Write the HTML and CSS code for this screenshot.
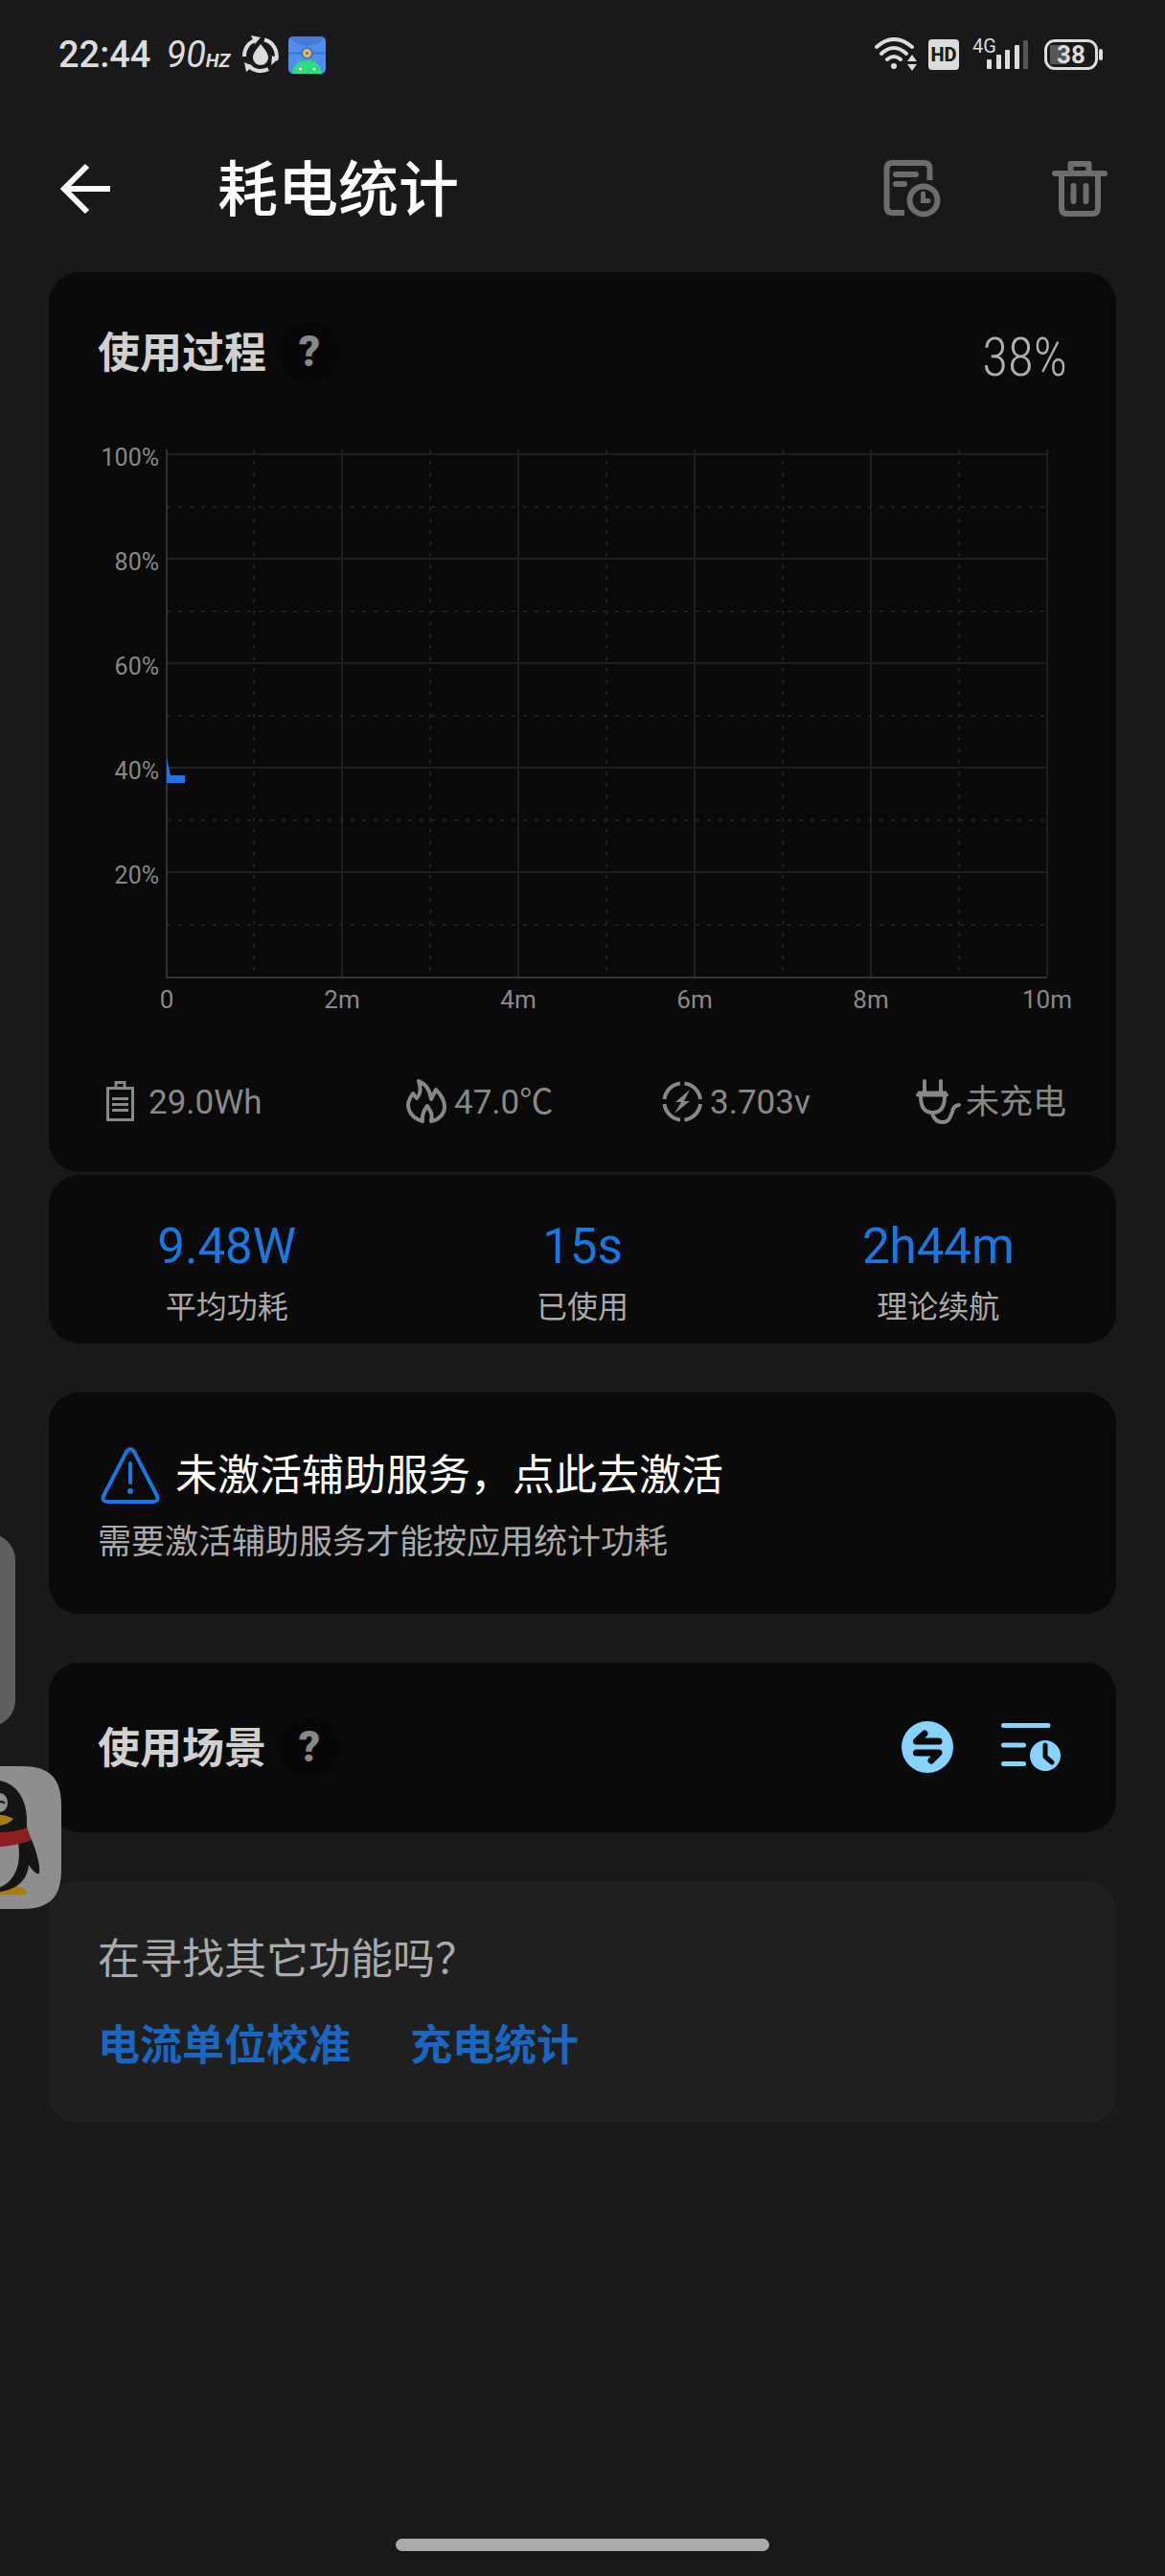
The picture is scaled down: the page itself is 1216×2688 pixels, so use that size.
FILE: index.html
```html
<!DOCTYPE html>
<html lang="zh-CN">
<head>
<meta charset="utf-8">
<meta name="viewport" content="width=device-width, initial-scale=1">
<title>耗电统计</title>
<link rel="stylesheet" href="styles.css">
</head>
<body>
<div class="status">
  <div class="status-side">
    <time class="clock">22:44</time>
    <span class="rate">90<small>HZ</small></span>
    <svg class="drop-icon" width="40" height="40" viewBox="0 0 40 40" fill="none" stroke="#dcdcdc" stroke-width="4">
      <path d="M3 22A17 17 0 0 1 13 5.500M24 4.500A17 17 0 0 1 36 26M28 35A17 17 0 0 1 7 31"/>
      <path fill="#dcdcdc" stroke="none" d="M20 9c5 6 8 10 8 14a8 8 0 0 1-16 0c0-4 3-8 8-14zM10 0l10 2-6 7zM39 24l-8 7 1-10zM3 28l9 4-7 6z"/>
    </svg>
    <svg class="app-icon" width="39" height="39" viewBox="0 0 39 39">
      <rect width="39" height="39" rx="5" fill="#508df0"/>
      <path d="M2 2Q4 0 6 0H33Q36 0 37 2Q30 10 19.500 10T2 2z" fill="#437bd8"/>
      <path d="M0 17.500H39" stroke="#3c74d4" stroke-width="2"/>
      <circle cx="19.500" cy="17.500" r="6" fill="#3c6cc0"/>
      <circle cx="19.500" cy="17.500" r="3" fill="none" stroke="#e6bf5c" stroke-width="3"/>
      <path d="M4 39a15.500 14 0 0 1 31 0z" fill="#30dc80"/>
      <path d="M9 22l4 7M30 22l-4 7" stroke="#30dc80"/>
      <circle cx="12.500" cy="34" r="1.500" fill="#fff"/><circle cx="27" cy="34" r="1.500" fill="#fff"/>
    </svg>
  </div>
  <div class="status-side status-right">
    <svg width="46" height="36" viewBox="0 0 46 36" fill="none" stroke="#dcdcdc" stroke-width="4" stroke-linecap="round">
      <path d="M3 10Q21 -6 40 10M8 17Q21 5 34 17M14 23Q21 17 28 23"/>
      <circle cx="21" cy="30" r="3" fill="#dcdcdc" stroke="none"/>
      <path d="M35 25l5-7 5 7zM35 28h10l-5 7z" fill="#dcdcdc" stroke="none"/>
    </svg>
    <span class="hd">HD</span>
    <span class="cell">
      <span class="cell-net">4G</span>
      <svg width="44" height="30" viewBox="0 0 44 30" fill="#dcdcdc">
        <rect x="0" y="20" width="5" height="10" rx="1"/><rect x="10" y="15" width="5" height="15" rx="1"/>
        <rect x="19" y="10" width="5" height="20" rx="1"/><rect x="29" y="5" width="5" height="25" rx="1"/>
        <rect x="38" y="0" width="5" height="30" rx="1" fill="#555"/>
      </svg>
    </span>
    <span class="battery"><span class="battery-box">38</span><i class="battery-nub"></i></span>
  </div>
</div>

<header class="bar">
  <button class="icon-btn" aria-label="返回">
    <svg width="54" height="54" viewBox="0 0 54 54" fill="none" stroke="#fff" stroke-width="6"><path d="M53 27H5M29 3L5 27L29 51"/></svg>
  </button>
  <h1>耗电统计</h1>
  <button class="icon-btn" aria-label="历史记录">
    <svg width="62" height="62" viewBox="0 0 62 62" fill="none" stroke="#6d6d6d" stroke-width="6" stroke-linecap="round">
      <path d="M48.500 22V10Q48.500 4 42.500 4H9.500Q3.500 4 3.500 10V50Q3.500 56 9.500 56H22" stroke-linecap="butt"/>
      <path d="M13 16H34M13 26H22"/>
      <circle cx="42" cy="43" r="14.500" stroke-width="6"/>
      <path d="M41.500 36V43.500H47" stroke-width="5"/>
    </svg>
  </button>
  <button class="icon-btn" aria-label="删除">
    <svg width="58" height="60" viewBox="0 0 58 60" fill="none" stroke="#6d6d6d" stroke-width="6" stroke-linecap="round" stroke-linejoin="round">
      <path d="M3 14H55M10 16V50Q10 56 16 56H42Q48 56 48 50V16M19.500 12V4H38.500V12M22.500 27V43M35.500 27V43"/>
    </svg>
  </button>
</header>

<main>
  <section class="card process">
    <div class="card-head">
      <h2>使用过程</h2>
      <button class="help" aria-label="帮助">?</button>
      <span class="level">38%</span>
    </div>
    <div class="chart">
      <svg class="plot" viewBox="0 0 1012 600" role="img" aria-label="电量曲线">
        <g class="grid-line">
          <path d="M72 23H991M72 132H991M72 241H991M72 350H991M72 459H991"/>
          <path d="M255 18V568M439 18V568M623 18V568M807 18V568M991 18V568"/>
        </g>
        <g class="grid-dash">
          <path d="M72 78H991M72 187H991M72 296H991M72 405H991M72 514H991"/>
          <path d="M163 18V568M347 18V568M531 18V568M715 18V568M899 18V568"/>
        </g>
        <path class="axis" d="M72 18V569H991"/>
        <path class="curve" d="M72 340L76 358H91V366H72z"/>
        <g class="tick tick-y">
          <text x="64" y="35">100%</text><text x="64" y="144">80%</text><text x="64" y="253">60%</text>
          <text x="64" y="362">40%</text><text x="64" y="471">20%</text>
        </g>
        <g class="tick tick-x">
          <text x="72" y="601">0</text><text x="255" y="601">2m</text><text x="439" y="601">4m</text>
          <text x="623" y="601">6m</text><text x="807" y="601">8m</text><text x="991" y="601">10m</text>
        </g>
      </svg>
    </div>
    <ul class="facts">
      <li>
        <svg width="48" height="48" viewBox="0 0 48 48" fill="none" stroke="#888" stroke-width="3"><path d="M10.500 10.500H36.500V43.500H10.500zM19 10V4.500H28V10M15 21.500H32M15 27.500H32M15 33.500H32"/></svg>
        <span>29.0Wh</span>
      </li>
      <li>
        <svg width="48" height="48" viewBox="0 0 48 48" fill="none" stroke="#888" stroke-width="4" stroke-linejoin="round"><path d="M20 45C10 42 5 35 5 28C5 23 8 19 10 16L14 21C19 16 18 9 16 3C23 6 28 13 29 22L34 12C40 18 43 24 43 30C43 38 36 44 29 45C31 37 28 34 25 29C21 34 19 38 20 45z"/></svg>
        <span>47.0℃</span>
      </li>
      <li>
        <svg width="48" height="48" viewBox="0 0 48 48" fill="none" stroke="#888" stroke-width="4"><path d="M22 5.500A19 19 0 0 0 5.500 22M26.500 5.500A19 19 0 0 1 43 22M5.500 27A19 19 0 0 0 22 43.500M43 27A19 19 0 0 1 26.500 43.500"/><path d="M32 12L17 25H23L16 37L32 24H26z" fill="#888" stroke="none"/></svg>
        <span>3.703v</span>
      </li>
      <li>
        <svg width="48" height="48" viewBox="0 0 48 48" fill="none" stroke="#888" stroke-width="4" stroke-linecap="round"><path d="M10 3V14M27 3V14M3 17.500H33M6 19C6 30 10 36 18.500 36S31 30 31 19M18 37C20 43 24 46 29 46C36 46 37 40 39 35C40 30 42 29 46 28"/><path d="M4 15H32" stroke-width="3"/></svg>
        <span>未充电</span>
      </li>
    </ul>
  </section>

  <dl class="card stats">
    <div><dd>9.48W</dd><dt>平均功耗</dt></div>
    <div><dd>15s</dd><dt>已使用</dt></div>
    <div><dd>2h44m</dd><dt>理论续航</dt></div>
  </dl>

  <a class="card notice" href="#activate">
    <span class="notice-title">
      <svg width="66" height="62" viewBox="0 0 66 62" fill="none" stroke="#1a76e0" stroke-width="4" stroke-linecap="round" stroke-linejoin="round"><path d="M30 6Q34 0 38 6L62 52Q64 58 58 58H10Q4 58 6 52zM34 18V38"/><circle cx="34" cy="47" r="3" fill="#1a76e0" stroke="none"/></svg>
      未激活辅助服务，点此去激活
    </span>
    <span class="notice-text">需要激活辅助服务才能按应用统计功耗</span>
  </a>

  <section class="card scene">
    <h2>使用场景</h2>
    <button class="help" aria-label="帮助">?</button>
    <button class="icon-btn swap" aria-label="切换">
      <svg width="56" height="56" viewBox="0 0 56 56" fill="none" stroke="#0a0a0a" stroke-width="7" stroke-linecap="round" stroke-linejoin="round"><circle cx="28" cy="28" r="27" fill="#87d3ff" stroke="none"/><path d="M40 22H16.500L25 14M16.500 34H40L32 42"/></svg>
    </button>
    <button class="icon-btn" aria-label="时间线">
      <svg width="64" height="52" viewBox="0 0 64 52" fill="none" stroke="#87d3ff" stroke-width="5" stroke-linecap="round" stroke-linejoin="round"><path d="M3.500 3.500H50M3.500 24H24.500M3.500 43.500H24.500"/><circle cx="47" cy="35" r="16" fill="#87d3ff" stroke="none"/><path d="M47 24V36L54 42" stroke="#0a0a0a"/></svg>
    </button>
  </section>

  <section class="card more">
    <p>在寻找其它功能吗？</p>
    <nav><a href="#calibrate">电流单位校准</a><a href="#charge">充电统计</a></nav>
  </section>
</main>

<i class="edge-handle"></i>
<svg class="float-app" width="149" height="149" viewBox="0 0 149 149" role="img" aria-label="QQ">
  <path d="M42 0H107C137 0 149 12 149 42V107C149 137 137 149 107 149H42C12 149 0 137 0 107V42C0 12 12 0 42 0z" fill="#8e8e8e"/>
  <path d="M76 126C95 122 112 126 113 131S105 134 97 134H76z" fill="#a57d12"/>
  <path d="M76 14C101 14 114 33 113 60C112 68 118 75 120 82C124 92 127 105 126 111C125 115 119 109 115 103C113 122 99 131 76 132z" fill="#141414"/>
  <path d="M76 84L104 80C107 98 104 124 76 129z" fill="#8e8e8e"/>
  <ellipse cx="85" cy="38" rx="8" ry="10" fill="#8e8e8e"/>
  <path d="M83 39Q87 35 90 39" fill="none" stroke="#141414" stroke-width="2"/>
  <path d="M70 51Q90 49 99 55Q93 62 76 63z" fill="#a57d12"/>
  <path d="M76 69Q98 70 113 64L118 77Q104 83 76 85z" fill="#8b1f22"/>
</svg>
<i class="home-bar"></i>
</body>
</html>
```
FILE: styles.css
```css
* { box-sizing: border-box; }
body {
  margin: 0;
  min-height: 100vh;
  display: flex;
  flex-direction: column;
  position: relative;
  overflow-x: hidden;
  background: #191919;
  color: #aaa;
  font-family: Roboto, "Noto Sans CJK SC", sans-serif;
}
h1, h2, p, dl, dd, ul { margin: 0; padding: 0; }
svg { display: block; flex: none; }
button { padding: 0; border: 0; background: none; font: inherit; color: inherit; cursor: pointer; }
a { text-decoration: none; color: inherit; }

.status {
  display: flex;
  justify-content: space-between;
  align-items: center;
  height: 114px;
  padding: 0 65px 0 61px;
  color: #dcdcdc;
}
.status-side { display: flex; align-items: center; }
.clock { font-size: 38px; font-weight: 500; }
.rate { margin-left: 16px; font-size: 38px; font-style: italic; }
.rate small { font-size: 20px; font-weight: 700; }
.drop-icon { margin-left: 12px; }
.app-icon { margin-left: 9px; }
.hd {
  width: 32px;
  margin-left: 11px;
  border-radius: 4px;
  background: #dcdcdc;
  color: #191919;
  font-size: 20px;
  font-weight: 800;
  line-height: 32px;
  text-align: center;
}
.cell { position: relative; margin-left: 29px; }
.cell-net { position: absolute; left: -15px; top: -6px; font-size: 20px; line-height: 24px; }
.battery { display: flex; align-items: center; gap: 1px; margin-left: 16px; }
.battery-box {
  width: 56px;
  height: 32px;
  border: 3px solid #dcdcdc;
  border-radius: 11px;
  background: linear-gradient(90deg, #555 17px, transparent 17px) 3px 3px / 44px 20px no-repeat;
  font-size: 26px;
  font-weight: 700;
  line-height: 27px;
  text-align: center;
}
.battery-nub { width: 4px; height: 12px; border-radius: 2px; background: #dcdcdc; }

.bar {
  display: flex;
  align-items: center;
  height: 166px;
  padding: 0 60px 0 62px;
}
.bar h1 {
  flex: 1;
  margin-left: 111px;
  padding-top: 4px;
  color: #fff;
  font-size: 63px;
  font-weight: 500;
  line-height: 80px;
}
.bar .icon-btn + .icon-btn { margin-left: 114px; }

main { display: flex; flex-direction: column; padding: 4px 51px 0; }
.card { border-radius: 32px; background: #0a0a0a; }
h2 { padding-top: 4px; color: #d0d0d0; font-size: 44px; font-weight: 700; line-height: 60px; }
.help {
  width: 64px;
  height: 64px;
  margin-left: 13px;
  border-radius: 50%;
  background: #070707;
  color: #888;
  font-size: 44px;
  font-weight: 900;
  line-height: 64px;
}

.process { padding: 51px 51px 48px; }
.card-head { display: flex; align-items: center; }
.level {
  margin-left: auto;
  padding-top: 12px;
  color: #b0b0b0;
  font-family: "Roboto Condensed", Roboto, sans-serif;
  font-size: 55px;
  font-weight: 300;
  line-height: 52px;
}
.chart { margin-top: 52px; }
.plot { width: 100%; height: auto; overflow: visible; }
.grid-line, .grid-dash, .axis { fill: none; stroke: #202020; stroke-width: 2; }
.grid-dash { stroke-dasharray: 4 8; }
.axis { stroke: #333; }
.curve { fill: #1a76e0; }
.tick { fill: #888; font-size: 26px; }
.tick-y { font-size: 25px; text-anchor: end; }
.tick-x { text-anchor: middle; }
.facts {
  display: grid;
  grid-template-columns: 319fr 267fr 267fr 159fr;
  margin-top: 72px;
  color: #888;
  font-size: 35px;
  line-height: 48px;
  list-style: none;
}
.facts li { display: flex; align-items: center; gap: 5px; white-space: nowrap; }
.facts span { padding-top: 4px; }

.stats {
  display: grid;
  grid-template-columns: repeat(3, 1fr);
  margin-top: 3px;
  padding: 45px 0 13px;
  text-align: center;
}
.stats div { display: flex; flex-direction: column; }
.stats dd { color: #1a76e0; font-size: 51px; line-height: 60px; }
.stats dt { margin-top: 8px; font-size: 32px; line-height: 50px; }

.notice {
  display: flex;
  flex-direction: column;
  margin-top: 51px;
  padding: 52px 51px 47px;
}
.notice-title {
  display: flex;
  align-items: center;
  gap: 15px;
  color: #fff;
  font-size: 44px;
  line-height: 70px;
}
.notice-text { margin-top: 8px; font-size: 35px; line-height: 54px; }

.scene { display: flex; align-items: center; margin-top: 51px; padding: 56px 57px 57px 51px; }
.swap { margin: 0 48px 0 auto; }

.more { margin-top: 51px; padding: 49px 51px 47px; border-radius: 28px; background: #1f1f1f; font-size: 44px; }
.more p { line-height: 66px; }
.more nav { display: flex; gap: 62px; margin-top: 24px; color: #1967c0; font-weight: 700; line-height: 66px; }

.edge-handle {
  position: absolute;
  left: -40px;
  top: 1600px;
  width: 56px;
  height: 202px;
  border-radius: 28px;
  background: #5f5f5f;
}
.float-app { position: absolute; left: -85px; top: 1843px; }
.home-bar { width: 390px; height: 13px; margin: auto auto 26px; border-radius: 7px; background: #aaa; }
```
